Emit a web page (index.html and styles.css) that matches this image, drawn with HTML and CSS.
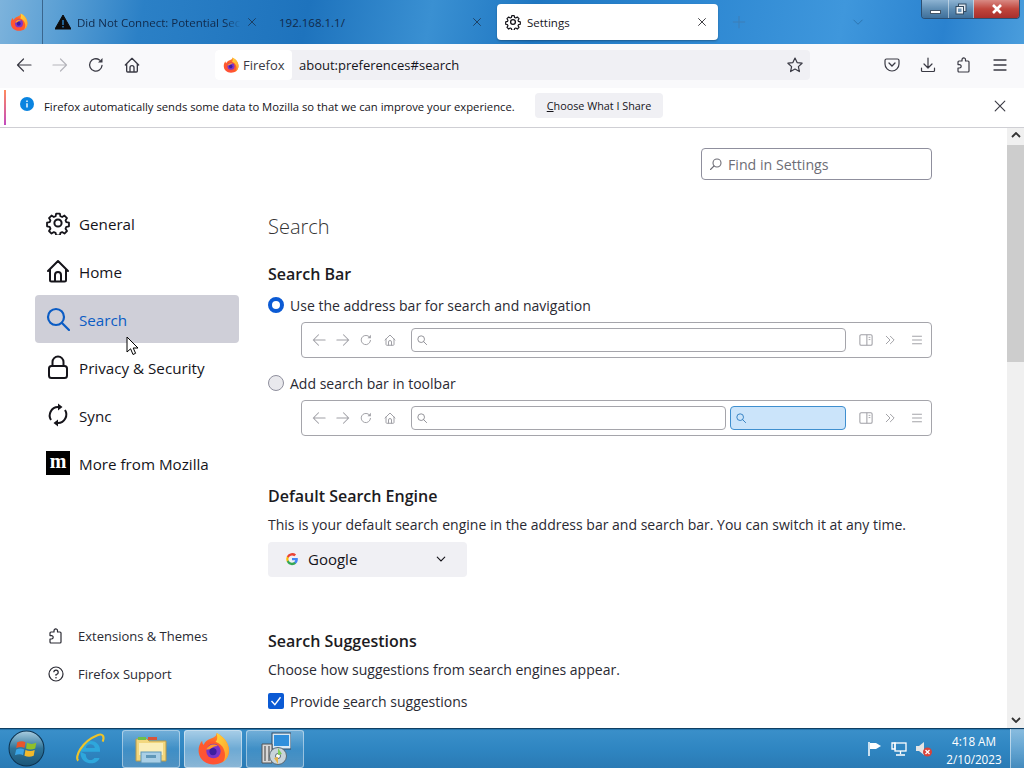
FILE: index.html
```html
<!DOCTYPE html>
<html lang="en">
<head>
<meta charset="utf-8">
<title>Settings</title>
<link rel="stylesheet" href="styles.css">
</head>
<body>
<svg class="defs" width="0" height="0" aria-hidden="true">
  <defs>
    <radialGradient id="fxo" cx="0.35" cy="0.8" r="0.9"><stop offset="0" stop-color="#ff4f3a"/><stop offset="0.55" stop-color="#ff5a2b"/><stop offset="1" stop-color="#ffa02e"/></radialGradient>
    <linearGradient id="fxy" x1="0" y1="0" x2="1" y2="1"><stop offset="0" stop-color="#ffd83a"/><stop offset="1" stop-color="#ff9a2b"/></linearGradient>
    <linearGradient id="orb" x1="0" y1="0" x2="0" y2="1"><stop offset="0" stop-color="#a9cde0"/><stop offset="0.5" stop-color="#2f7499"/><stop offset="1" stop-color="#1a5578"/></linearGradient>
    <symbol id="fx" viewBox="0 0 32 32">
      <path d="M19 1c6 3 12 9 12 17 0 8-6.500 13.500-15 13.500S1.500 25.500 1.500 18C1.500 14 3 10.500 5 8.500c0 2 .5 3 1.500 4 1-3 3.500-5 6.500-6C16.500 5.500 19 4 19 1z" fill="url(#fxo)"/>
      <path d="M19 1c6 3 12 9 12 17 0 5-2.500 9-6 11.500 2-3 2.500-6 2-9.500-1-6-5-9-9-10.500C20 8 20 4 19 1z" fill="url(#fxy)"/>
      <circle cx="16" cy="18.500" r="7" fill="#7b35c8"/>
      <path d="M9 17c1-3 4-5 7.500-5 1.500 0 2.500.5 3.500 1.500-3 0-5 1-6 2.500-1.500.5-3 1-5 1z" fill="#ff9a2b"/>
      <circle cx="15.500" cy="19" r="3.500" fill="#3c1fa0"/>
    </symbol>
    <symbol id="gear" viewBox="0 0 24 24"><path d="M10 1.500h4l.7 3 1.900.8 2.600-1.600 2.800 2.800-1.600 2.600.8 1.900 3 .7v4l-3 .7-.8 1.900 1.600 2.600-2.800 2.800-2.600-1.600-1.900.8-.7 3h-4l-.7-3-1.900-.8-2.600 1.600-2.800-2.800 1.600-2.600-.8-1.900-3-.7v-4l3-.7.8-1.900-1.600-2.600 2.800-2.800 2.600 1.600 1.900-.8z" fill="none" stroke="currentColor" stroke-width="2" stroke-linejoin="round" transform="translate(1.200 1.200) scale(.9)"/><circle cx="12" cy="12" r="3.600" fill="none" stroke="currentColor" stroke-width="2"/></symbol>
    <symbol id="home" viewBox="0 0 24 24"><path d="M2 12 12 2l10 10M4 10v11a1.500 1.500 0 0 0 1.500 1.500h13A1.500 1.500 0 0 0 20 21V10M9 22.500V16a3 3 0 0 1 6 0v6.500" fill="none" stroke="currentColor" stroke-width="2" stroke-linecap="round" stroke-linejoin="round"/></symbol>
    <symbol id="search" viewBox="0 0 24 24"><circle cx="10" cy="10" r="8" fill="none" stroke="currentColor" stroke-width="2.200"/><path d="m16 16 7 7" stroke="currentColor" stroke-width="2.200" stroke-linecap="round"/></symbol>
    <symbol id="lock" viewBox="0 0 24 24"><path d="M6.500 10V7a5.500 5.500 0 0 1 11 0v3" fill="none" stroke="currentColor" stroke-width="2"/><rect x="3" y="11" width="18" height="12" rx="2.500" fill="none" stroke="currentColor" stroke-width="2"/></symbol>
    <symbol id="sync" viewBox="0 0 24 24"><path d="M5 17A8.500 8.500 0 0 1 12 4h1M19 7a8.500 8.500 0 0 1-7 13h-1" fill="none" stroke="currentColor" stroke-width="2"/><path d="M12 .5 16.500 4 12 7.500zM12 16.500 7.500 20l4.500 3.500z" fill="currentColor"/></symbol>
    <symbol id="ext" viewBox="0 0 16 16"><path d="M6.500 1.500a1.700 1.700 0 0 1 3 1.100V4h2.500a1 1 0 0 1 1 1v9a1 1 0 0 1-1 1H3a1 1 0 0 1-1-1v-3h1.500a1.700 1.700 0 0 0 0-3.400H2V5a1 1 0 0 1 1-1h3V2.800c0-.5.200-1 .5-1.300z" fill="none" stroke="currentColor" stroke-width="1.200" stroke-linejoin="round"/></symbol>
    <symbol id="help" viewBox="0 0 16 16"><circle cx="8" cy="8" r="7" fill="none" stroke="currentColor" stroke-width="1.200"/><path d="M5.800 6.200A2.200 2.200 0 1 1 8 8.500v1.200" fill="none" stroke="currentColor" stroke-width="1.200"/><circle cx="8" cy="11.700" r=".8" fill="currentColor"/></symbol>
    <symbol id="back" viewBox="0 0 16 16"><path d="M15 8H1.500M7.500 2 1.500 8l6 6" fill="none" stroke="currentColor" stroke-width="1.200" stroke-linecap="round" stroke-linejoin="round"/></symbol>
    <symbol id="fwd" viewBox="0 0 16 16"><path d="M1 8h13.500M8.500 2l6 6-6 6" fill="none" stroke="currentColor" stroke-width="1.200" stroke-linecap="round" stroke-linejoin="round"/></symbol>
    <symbol id="reload" viewBox="0 0 16 16"><path d="M14 8.500A6.200 6.200 0 1 1 11.500 3" fill="none" stroke="currentColor" stroke-width="1.300" stroke-linecap="round"/><path d="M14.500 1v4.500H10z" fill="currentColor"/></symbol>
    <symbol id="menu" viewBox="0 0 16 16"><path d="M2 3h12M2 8h12M2 13h12" stroke="currentColor" stroke-width="1.300" stroke-linecap="round"/></symbol>
    <symbol id="panel" viewBox="0 0 16 16"><rect x="1" y="2" width="14" height="12" rx="1.500" fill="none" stroke="currentColor" stroke-width="1.200"/><path d="M9 2v12" stroke="currentColor" stroke-width="1.200"/><path d="M11 5h2M11 7.500h2" stroke="currentColor"/></symbol>
    <symbol id="dbl" viewBox="0 0 16 16"><path d="m3 3 5 5-5 5M8.500 3l5 5-5 5" fill="none" stroke="currentColor" stroke-width="1.300" stroke-linecap="round" stroke-linejoin="round"/></symbol>
    <symbol id="x" viewBox="0 0 16 16"><path d="m2.500 2.500 11 11M13.500 2.500l-11 11" stroke="currentColor" stroke-width="1.300" stroke-linecap="round"/></symbol>
  </defs>
</svg>
<div class="screen">
  <header class="tabbar">
    <div class="fxbtn"><svg class="i18"><use href="#fx"/></svg></div>
    <div class="tab tab-first">
      <svg class="i16" viewBox="0 0 16 16"><path d="M8 1 16 15H0z" fill="#0c0c0d" stroke="#0c0c0d" stroke-linejoin="round"/><path d="M7.300 6h1.400v5H7.300zM7.300 12h1.400v1.400H7.300z" fill="#2c84c8"/></svg>
      <span class="tab-label fade">Did Not Connect: Potential Sec</span>
      <svg class="i10 tabx"><use href="#x"/></svg>
    </div>
    <div class="tab tab-second">
      <span class="tab-label">192.168.1.1/</span>
      <svg class="i10 tabx"><use href="#x"/></svg>
    </div>
    <div class="tab tab-active">
      <svg class="i16"><use href="#gear"/></svg>
      <span class="tab-label">Settings</span>
      <svg class="i10 tabx"><use href="#x"/></svg>
    </div>
    <div class="newtab"><svg class="i14" viewBox="0 0 16 16"><path d="M8 1v14M1 8h14" stroke="currentColor" stroke-width="1.200"/></svg></div>
    <div class="alltabs"><svg class="i12" viewBox="0 0 16 16"><path d="m2 5 6 6 6-6" fill="none" stroke="currentColor" stroke-width="1.300"/></svg></div>
    <div class="winctl">
      <div class="wbtn wmin"><span class="minbar"></span></div>
      <div class="wbtn wmax"><svg class="i12" viewBox="0 0 12 12"><rect x="3.500" y="1" width="7.500" height="7.500" fill="#dfe8f0" stroke="#334a60"/><rect x="1" y="3.500" width="7.500" height="7.500" fill="#eef3f7" stroke="#334a60"/><rect x="3" y="5.500" width="3.500" height="3.500" fill="#6f97b8"/></svg></div>
      <div class="wbtn wclose"><svg class="i12" viewBox="0 0 12 12"><path d="m2 2 8 8M10 2l-8 8" stroke="#fff" stroke-width="2.600"/></svg></div>
    </div>
  </header>

  <nav class="navbar">
    <svg class="i16 nav-ico"><use href="#back"/></svg>
    <svg class="i16 nav-ico dim"><use href="#fwd"/></svg>
    <svg class="i16 nav-ico"><use href="#reload"/></svg>
    <svg class="i16 nav-ico"><use href="#home"/></svg>
    <div class="urlbar">
      <div class="chip"><svg class="i16"><use href="#fx"/></svg><span>Firefox</span></div>
      <span class="url">about:preferences#search</span>
      <svg class="i16 star" viewBox="0 0 16 16"><path d="m8 1 2.100 4.600 5 .6-3.700 3.400 1 5L8 12.100 3.600 14.600l1-5L.9 6.200l5-.6z" fill="none" stroke="currentColor" stroke-width="1.200" stroke-linejoin="round"/></svg>
    </div>
    <div class="nav-right">
      <svg class="i16" viewBox="0 0 16 16"><path d="M2.500 2h11A1.500 1.500 0 0 1 15 3.500V7A7 7 0 0 1 1 7V3.500A1.500 1.500 0 0 1 2.500 2z" fill="none" stroke="currentColor" stroke-width="1.200"/><path d="m5 6 3 3 3-3" fill="none" stroke="currentColor" stroke-width="1.300" stroke-linecap="round"/></svg>
      <svg class="i16" viewBox="0 0 16 16"><path d="M8 1v9.500M4 7l4 4 4-4M1.500 11v2.500a1 1 0 0 0 1 1h11a1 1 0 0 0 1-1V11" fill="none" stroke="currentColor" stroke-width="1.200" stroke-linecap="round" stroke-linejoin="round"/></svg>
      <svg class="i16"><use href="#ext"/></svg>
      <svg class="i16"><use href="#menu"/></svg>
    </div>
  </nav>

  <div class="infobar">
    <span class="info-strip"></span>
    <svg class="i14 info-ico" viewBox="0 0 16 16"><circle cx="8" cy="8" r="8" fill="#0a84e0"/><path d="M7.200 7h1.600v5H7.200zM7.200 4h1.600v1.600H7.200z" fill="#fff"/></svg>
    <span class="info-text">Firefox automatically sends some data to Mozilla so that we can improve your experience.</span>
    <button class="info-btn"><u>C</u>hoose What I Share</button>
    <svg class="i14 info-x"><use href="#x"/></svg>
  </div>

  <div class="viewport">
    <aside class="sidebar">
      <div class="cat"><svg class="i24"><use href="#gear"/></svg><span>General</span></div>
      <div class="cat"><svg class="i24"><use href="#home"/></svg><span>Home</span></div>
      <div class="cat cat-on"><svg class="i24"><use href="#search"/></svg><span>Search</span></div>
      <div class="cat"><svg class="i24"><use href="#lock"/></svg><span>Privacy &amp; Security</span></div>
      <div class="cat"><svg class="i24"><use href="#sync"/></svg><span>Sync</span></div>
      <div class="cat"><span class="moz">m</span><span>More from Mozilla</span></div>
      <div class="side-foot">
        <div class="foot"><svg class="i16"><use href="#ext"/></svg><span>Extensions &amp; Themes</span></div>
        <div class="foot"><svg class="i16"><use href="#help"/></svg><span>Firefox Support</span></div>
      </div>
    </aside>

    <main class="content">
      <div class="finder-row">
        <div class="finder"><svg class="i12 flip"><use href="#search"/></svg><span>Find in Settings</span></div>
      </div>
      <h1>Search</h1>
      <h2 class="h-bar">Search Bar</h2>
      <div class="opt"><span class="radio radio-on"></span><span>Use the address bar for search and navigation</span></div>
      <div class="preview">
        <div class="pv-nav">
          <svg class="i14"><use href="#back"/></svg><svg class="i14"><use href="#fwd"/></svg><svg class="i12 pv-reload"><use href="#reload"/></svg><svg class="i12 pv-home"><use href="#home"/></svg>
        </div>
        <div class="pv-field pv-grow"><svg class="i10"><use href="#search"/></svg></div>
        <div class="pv-right"><svg class="i14"><use href="#panel"/></svg><svg class="i12"><use href="#dbl"/></svg><svg class="i12 pv-menu"><use href="#menu"/></svg></div>
      </div>
      <div class="opt opt-2"><span class="radio"></span><span>Add search bar in toolbar</span></div>
      <div class="preview">
        <div class="pv-nav">
          <svg class="i14"><use href="#back"/></svg><svg class="i14"><use href="#fwd"/></svg><svg class="i12 pv-reload"><use href="#reload"/></svg><svg class="i12 pv-home"><use href="#home"/></svg>
        </div>
        <div class="pv-field pv-grow"><svg class="i10"><use href="#search"/></svg></div>
        <div class="pv-field pv-hot"><svg class="i10"><use href="#search"/></svg></div>
        <div class="pv-right"><svg class="i14"><use href="#panel"/></svg><svg class="i12"><use href="#dbl"/></svg><svg class="i12 pv-menu"><use href="#menu"/></svg></div>
      </div>

      <h2 class="h-engine">Default Search Engine</h2>
      <p class="desc">This is your default search engine in the address bar and search bar. You can switch it at any time.</p>
      <div class="select">
        <svg class="i14" viewBox="0 0 24 24"><path d="M22 12.300c0-.8-.1-1.500-.2-2.100H12v4h5.600a4.800 4.800 0 0 1-2.100 3.100v2.600h3.400c2-1.800 3.100-4.500 3.100-7.600z" fill="#4285f4"/><path d="M12 22.500c2.800 0 5.200-.9 6.900-2.600l-3.400-2.600c-.9.600-2.100 1-3.500 1-2.700 0-5-1.800-5.800-4.300H3.200v2.700A10.500 10.500 0 0 0 12 22.500z" fill="#34a853"/><path d="M6.200 14a6.300 6.300 0 0 1 0-4V7.300H3.200a10.500 10.500 0 0 0 0 9.400z" fill="#fbbc05"/><path d="M12 5.800c1.500 0 2.900.5 4 1.500l3-3A10.500 10.500 0 0 0 3.200 7.300L6.200 10C7 7.600 9.300 5.800 12 5.800z" fill="#ea4335"/></svg>
        <span>Google</span>
        <svg class="i10 caret" viewBox="0 0 16 16"><path d="m2 5 6 6 6-6" fill="none" stroke="currentColor" stroke-width="1.800" stroke-linecap="round"/></svg>
      </div>

      <h2 class="h-sugg">Search Suggestions</h2>
      <p class="desc">Choose how suggestions from search engines appear.</p>
      <div class="opt opt-check">
        <span class="check"><svg class="i12" viewBox="0 0 16 16"><path d="m2 8 4.500 5L14 3" fill="none" stroke="#fff" stroke-width="1.800"/></svg></span>
        <span>Provide <u>s</u>earch suggestions</span>
      </div>
    </main>

    <div class="scrollbar">
      <svg class="sb-arrow" viewBox="0 0 10 6"><path d="m1 5 4-4 4 4" fill="none" stroke="#333" stroke-width="1.800"/></svg>
      <div class="thumb"></div>
      <svg class="sb-arrow sb-down" viewBox="0 0 10 6"><path d="m1 1 4 4 4-4" fill="none" stroke="#333" stroke-width="1.800"/></svg>
    </div>
  </div>

  <footer class="taskbar">
    <div class="start">
      <svg width="37" height="37" viewBox="0 0 36 36"><circle cx="18" cy="18" r="17" fill="url(#orb)" stroke="#0d3350"/><path d="M9 12c3-1.500 6-1.500 8 0l-1 5.500c-2-1.300-5-1.300-8 0z" fill="#e8552a"/><path d="M18.500 12.500c3 1.500 6 1.500 9 0l-1 5.500c-3 1.300-6 1.300-9 0z" fill="#8fc02a"/><path d="M8 19c3-1.300 5.500-1.300 7.700 0l-1 5.500c-2-1.300-5-1.300-8 0z" fill="#3aa4e4"/><path d="M17 19.500c3 1.300 6 1.300 9 0l-1 5.500c-3 1.300-6 1.300-9 0z" fill="#f2b92a"/></svg>
    </div>
    <div class="pin-ie">
      <svg width="36" height="36" viewBox="0 0 34 34"><path d="M8 19.500h18.500c.5-6-3.500-10-8.500-10-6 0-10 5-10 11 0 6 4.500 10 10 10 4 0 7-2 8-5h-5c-.8 1.300-2 2-3.500 2-2.500 0-4.500-2-4.500-5.500zM13 16c.3-2 2-3.500 4.300-3.500S21.500 14 21.500 16z" fill="#2ea7dc" fill-rule="evenodd"/><path d="M6 28C2 25 9 10 24 4c5-2 7 1 5 6" fill="none" stroke="#eec32a" stroke-width="2"/></svg>
    </div>
    <div class="tb-btn">
      <svg width="32" height="30" viewBox="0 0 32 30"><path d="M1 5h11l2 2h17v20H1z" fill="#f2d77e" stroke="#b89a4a"/><rect x="3" y="3" width="8" height="3" fill="#6ebf4a"/><rect x="13" y="3" width="9" height="3" fill="#d8543a"/><rect x="4" y="9" width="24" height="12" fill="#fbeeb8"/><rect x="6" y="18" width="20" height="11" fill="#a9cfe6" stroke="#5f97b8"/><rect x="11" y="21" width="10" height="3" fill="#5f97b8"/></svg>
    </div>
    <div class="tb-btn tb-on"><svg width="33" height="33"><use href="#fx"/></svg></div>
    <div class="tb-btn">
      <svg width="32" height="34" viewBox="0 0 32 34"><rect x="13" y="1" width="19" height="16" fill="#d7e8f4" stroke="#2d4a66"/><rect x="15" y="3" width="15" height="11" fill="#2f8fdc"/><path d="M3 12h10v19H3z" fill="#d8d8d8" stroke="#555"/><path d="M5 14h2v15H5zM9 14h2v15H9z" fill="#8a8a8a"/><circle cx="19" cy="24" r="8.500" fill="#c9d4da" stroke="#5a6a74"/><circle cx="19" cy="24" r="2.500" fill="#fff" stroke="#5a6a74"/><path d="m19 16 4 6-4 1z" fill="#7fd05a"/><path d="m19 32-4-6 4-1z" fill="#e8b44a"/></svg>
    </div>
    <div class="tray">
      <svg width="16" height="16" viewBox="0 0 16 16"><path d="M2 1v14" stroke="#fff" stroke-width="1.500"/><path d="M3 2h6l5 3-5 3H3z" fill="#fff"/></svg>
      <svg width="16" height="16" viewBox="0 0 16 16"><rect x="4" y="2" width="11" height="8" fill="none" stroke="#fff" stroke-width="1.300"/><path d="M1 2h3v6H1zM9.500 10v3M5 14h9" stroke="#fff" stroke-width="1.300" fill="none"/></svg>
      <svg width="18" height="16" viewBox="0 0 18 16"><path d="M1 5h3l5-4v13l-5-4H1z" fill="#e4e4e4"/><circle cx="12.500" cy="11" r="4.500" fill="#d8433a"/><path d="m10.500 9 4 4M14.500 9l-4 4" stroke="#fff" stroke-width="1.300"/></svg>
      <div class="clock"><span>4:18 AM</span><span>2/10/2023</span></div>
    </div>
    <div class="showdesk"></div>
  </footer>

  <svg class="cursor" width="14" height="20" viewBox="0 0 14 20"><path d="M1 1v15l3.600-3.200L7 18.500l2.600-1.200-2.400-5.300H12z" fill="#fff" stroke="#000" stroke-width="1"/></svg>
</div>
</body>
</html>
```

FILE: styles.css
```css
* { box-sizing: border-box; }
html, body { margin: 0; padding: 0; }
body { width: 1024px; height: 768px; overflow: hidden; font-family: "Open Sans", "Noto Sans", "Liberation Sans", sans-serif; color: #15141a; background: #fff; }
.defs { position: absolute; }
svg { display: block; flex: none; }
.i10 { width: 10px; height: 10px; }
.i12 { width: 12px; height: 12px; }
.i14 { width: 14px; height: 14px; }
.i16 { width: 16px; height: 16px; }
.i18 { width: 18px; height: 18px; }
.i24 { width: 24px; height: 24px; }

.screen { position: relative; width: 1024px; height: 768px; display: flex; flex-direction: column; overflow: hidden; }

/* tab strip */
.tabbar { height: 44px; flex: none; display: flex; align-items: center; position: relative; background: linear-gradient(100deg, #7db3dc 0%, #5a9fd4 6%, #2b80c6 14%, #1e73bd 30%, #3a90d2 42%, #1f77c2 52%, #2e88d2 68%, #3f97dc 82%, #2a82cf 92%, #4a9ddc 100%); }
.fxbtn { width: 43px; height: 44px; display: flex; align-items: center; justify-content: center; border-right: 1px solid #3a668e; padding-right: 4px; }
.tab { height: 36px; display: flex; align-items: center; font-size: 11.500px; color: #10294a; gap: 6px; }
.tab-label { flex: 1; white-space: nowrap; overflow: hidden; }
.fade { -webkit-mask-image: linear-gradient(90deg, #000 90%, transparent 100%); mask-image: linear-gradient(90deg, #000 90%, transparent 100%); }
.tab-first { width: 222px; padding-left: 12px; }
.tab-second { width: 222px; padding: 0 6px 0 13px; margin-left: 1px; }
.tab-first .tabx { margin-right: 8px; }
.tab-active { width: 221px; margin-left: 9px; padding: 0 11px 0 8px; background: #fff; border-radius: 4px; color: #15141a; box-shadow: 0 1px 2px rgba(0,0,0,.3); gap: 6px; }
.tabx { color: #1a3350; }
.tab-active .tabx { color: #15141a; }
.newtab { margin-left: 14px; color: #3d7fb8; }
.alltabs { margin-left: 106px; color: #2c74b0; }
.winctl { position: absolute; top: 0; right: 4px; height: 19px; display: flex; border: 1px solid #2c4f72; border-top: 0; border-radius: 0 0 4px 4px; overflow: hidden; }
.wbtn { height: 18px; display: flex; align-items: center; justify-content: center; border-right: 1px solid rgba(255,255,255,.45); }
.wmin { width: 27px; background: linear-gradient(#8db3d2, #5f8db3 50%, #3f709b); }
.wmax { width: 25px; background: linear-gradient(#8db3d2, #5f8db3 50%, #3f709b); }
.wclose { width: 45px; background: linear-gradient(#d98a84, #c0453c 50%, #a82f2c); border-right: 0; }
.minbar { width: 11px; height: 4px; background: #fff; margin-top: 5px; border: 1px solid #456; }

/* navigation */
.navbar { height: 44px; flex: none; background: #f9f9fb; display: flex; align-items: center; padding: 0 0 2px 16px; gap: 20px; color: #3a3a44; }
.nav-ico.dim { color: #b5b5bb; }
.urlbar { width: 595px; height: 30px; flex: none; margin-left: 55px; background: #f0f0f4; border-radius: 4px; display: flex; align-items: center; font-size: 13px; }
.chip { width: 77px; height: 30px; background: #fff; border-radius: 4px; display: flex; align-items: center; gap: 4px; padding-left: 8px; color: #3a3a44; }
.url { margin-left: 7px; color: #15141a; }
.star { margin-left: auto; margin-right: 7px; color: #3a3a44; }
.nav-right { display: flex; gap: 20px; margin-left: 54px; flex: none; }

/* notification */
.infobar { height: 40px; flex: none; display: flex; align-items: center; background: #fff; border-bottom: 1px solid #cfcfd4; padding-bottom: 4px; font-size: 11.280px; position: relative; }
.info-strip { width: 2px; height: 35px; margin-left: 4px; margin-top: 3px; background: linear-gradient(#ff8a5c, #c34bc0); }
.info-ico { margin-left: 14px; margin-top: -3px; }
.info-text { margin-left: 10px; margin-top: 2px; white-space: nowrap; width: 471px; }
.info-btn { width: 128px; height: 25px; margin-left: 20px; background: #f0f0f4; border: 0; border-radius: 4px; font: inherit; font-size: 10.800px; color: #15141a; padding: 0; }
.info-x { margin-left: auto; margin-right: 17px; color: #3a3a44; }

/* page */
.viewport { flex: 1; min-height: 0; display: flex; overflow: hidden; background: #fff; }
.sidebar { width: 268px; flex: none; padding: 71px 29px 46px 35px; display: flex; flex-direction: column; }
.cat { height: 48px; flex: none; display: flex; align-items: center; gap: 9px; padding-left: 11px; font-size: 15.200px; border-radius: 4px; white-space: nowrap; }
.cat span:last-child { padding-top: 1px; }
.cat-on { background: #cfcfd8; color: #0b5cc4; }
.moz { width: 24px; height: 24px; background: #000; color: #fff; font: bold 20px/20px "Liberation Serif", serif; text-align: center; }
.side-foot { margin-top: auto; display: flex; flex-direction: column; gap: 22px; padding-left: 13px; }
.foot { height: 16px; display: flex; align-items: center; gap: 14px; font-size: 13px; color: #2a2a33; white-space: nowrap; }

.content { width: 664px; flex: none; padding-top: 20px; font-size: 14.020px; }
.finder-row { display: flex; justify-content: flex-end; }
.finder { width: 231px; height: 32px; border: 1px solid #8f8f9d; border-radius: 4px; display: flex; align-items: center; gap: 6px; padding-left: 8px; font-size: 14.200px; color: #6d6d76; }
.flip { transform: scaleX(-1); }
h1 { margin: 32px 0 0; height: 30px; line-height: 30px; font-size: 20px; font-weight: 300; color: #333; }
h2 { margin: 0; font-size: 16px; line-height: 22px; font-weight: 600; color: #1c1b22; }
.h-bar { margin-top: 21px; }
.opt { display: flex; align-items: center; gap: 6px; height: 20px; white-space: nowrap; color: #2a2a33; }
.h-bar + .opt { margin-top: 10px; }
.opt-2 { margin-top: 15px; }
.radio { width: 16px; height: 16px; border-radius: 50%; background: #e9e9ed; border: 1px solid #8f8f9d; flex: none; }
.radio-on { background: #fff; border: 4px solid #0b5ad4; }
.preview { margin: 7px 0 0 33px; height: 36px; width: 631px; border: 1px solid #a5a5ab; border-radius: 4px; display: flex; align-items: center; gap: 4px; color: #a0a0a6; }
.pv-nav { width: 105px; flex: none; display: flex; align-items: center; gap: 9.500px; padding-left: 10px; }
.pv-reload { margin-left: 1px; }
.pv-home { margin-left: 2px; }
.pv-field { height: 24px; border: 1px solid #a5a5ab; border-radius: 4px; display: flex; align-items: center; padding-left: 5px; color: #8a8a90; }
.pv-grow { flex: 1; }
.pv-hot { width: 116px; flex: none; background: #cbe4fa; border-color: #3f8fcf; color: #2c7cc0; }
.pv-right { width: 81px; flex: none; display: flex; align-items: center; gap: 11px; padding-left: 9px; }
.pv-menu { margin-left: 4px; }
.h-engine { margin-top: 49px; }
.desc { margin: 8px 0 0; height: 20px; line-height: 20px; color: #2a2a33; white-space: nowrap; }
.select { width: 199px; height: 35px; margin-top: 7px; padding: 0 0 1px 17px; background: #f0f0f4; border-radius: 4px; display: flex; align-items: center; gap: 9px; font-size: 15px; }
.caret { margin-left: auto; margin-right: 21px; }
.h-sugg { margin-top: 53px; }
.opt-check { margin-top: 11px; }
.check { width: 16px; height: 16px; background: #0b5ad4; border-radius: 2px; display: flex; align-items: center; justify-content: center; }

.scrollbar { width: 17px; margin-left: 75px; flex: none; background: #f0f0f0; display: flex; flex-direction: column; align-items: center; }
.sb-arrow { width: 10px; height: 6px; margin-top: 4px; margin-bottom: 7px; }
.thumb { width: 17px; height: 217px; background: #cdcdcd; }
.sb-down { margin-top: auto; margin-bottom: 5px; }

/* taskbar */
.taskbar { height: 40px; flex: none; display: flex; align-items: center; color: #fff; background: linear-gradient(#1b6aa3 0, #3a8fc9 4%, #2f86c2 50%, #2a7ab4 100%); border-top: 1px solid #0f3f63; }
.start { width: 52px; display: flex; justify-content: center; }
.pin-ie { width: 70px; display: flex; justify-content: center; padding-left: 5px; }
.tb-btn { width: 58px; height: 38px; margin-right: 4px; display: flex; align-items: center; justify-content: center; border: 1px solid rgba(255,255,255,.45); border-radius: 3px; background: linear-gradient(rgba(255,255,255,.28), rgba(255,255,255,.08) 50%, rgba(255,255,255,.18)); }
.tb-on { background: linear-gradient(rgba(255,255,255,.55), rgba(255,255,255,.3) 50%, rgba(255,255,255,.45)); }
.tray { margin-left: auto; display: flex; align-items: center; gap: 8px; }
.clock { width: 62px; margin-left: 2px; margin-right: 5px; padding-top: 2px; display: flex; flex-direction: column; align-items: center; font-size: 11.700px; line-height: 18px; }
.showdesk { width: 14px; height: 39px; background: linear-gradient(rgba(255,255,255,.4), rgba(255,255,255,.12)); border-left: 1px solid rgba(255,255,255,.5); }

.cursor { position: absolute; left: 126px; top: 336px; }
```
